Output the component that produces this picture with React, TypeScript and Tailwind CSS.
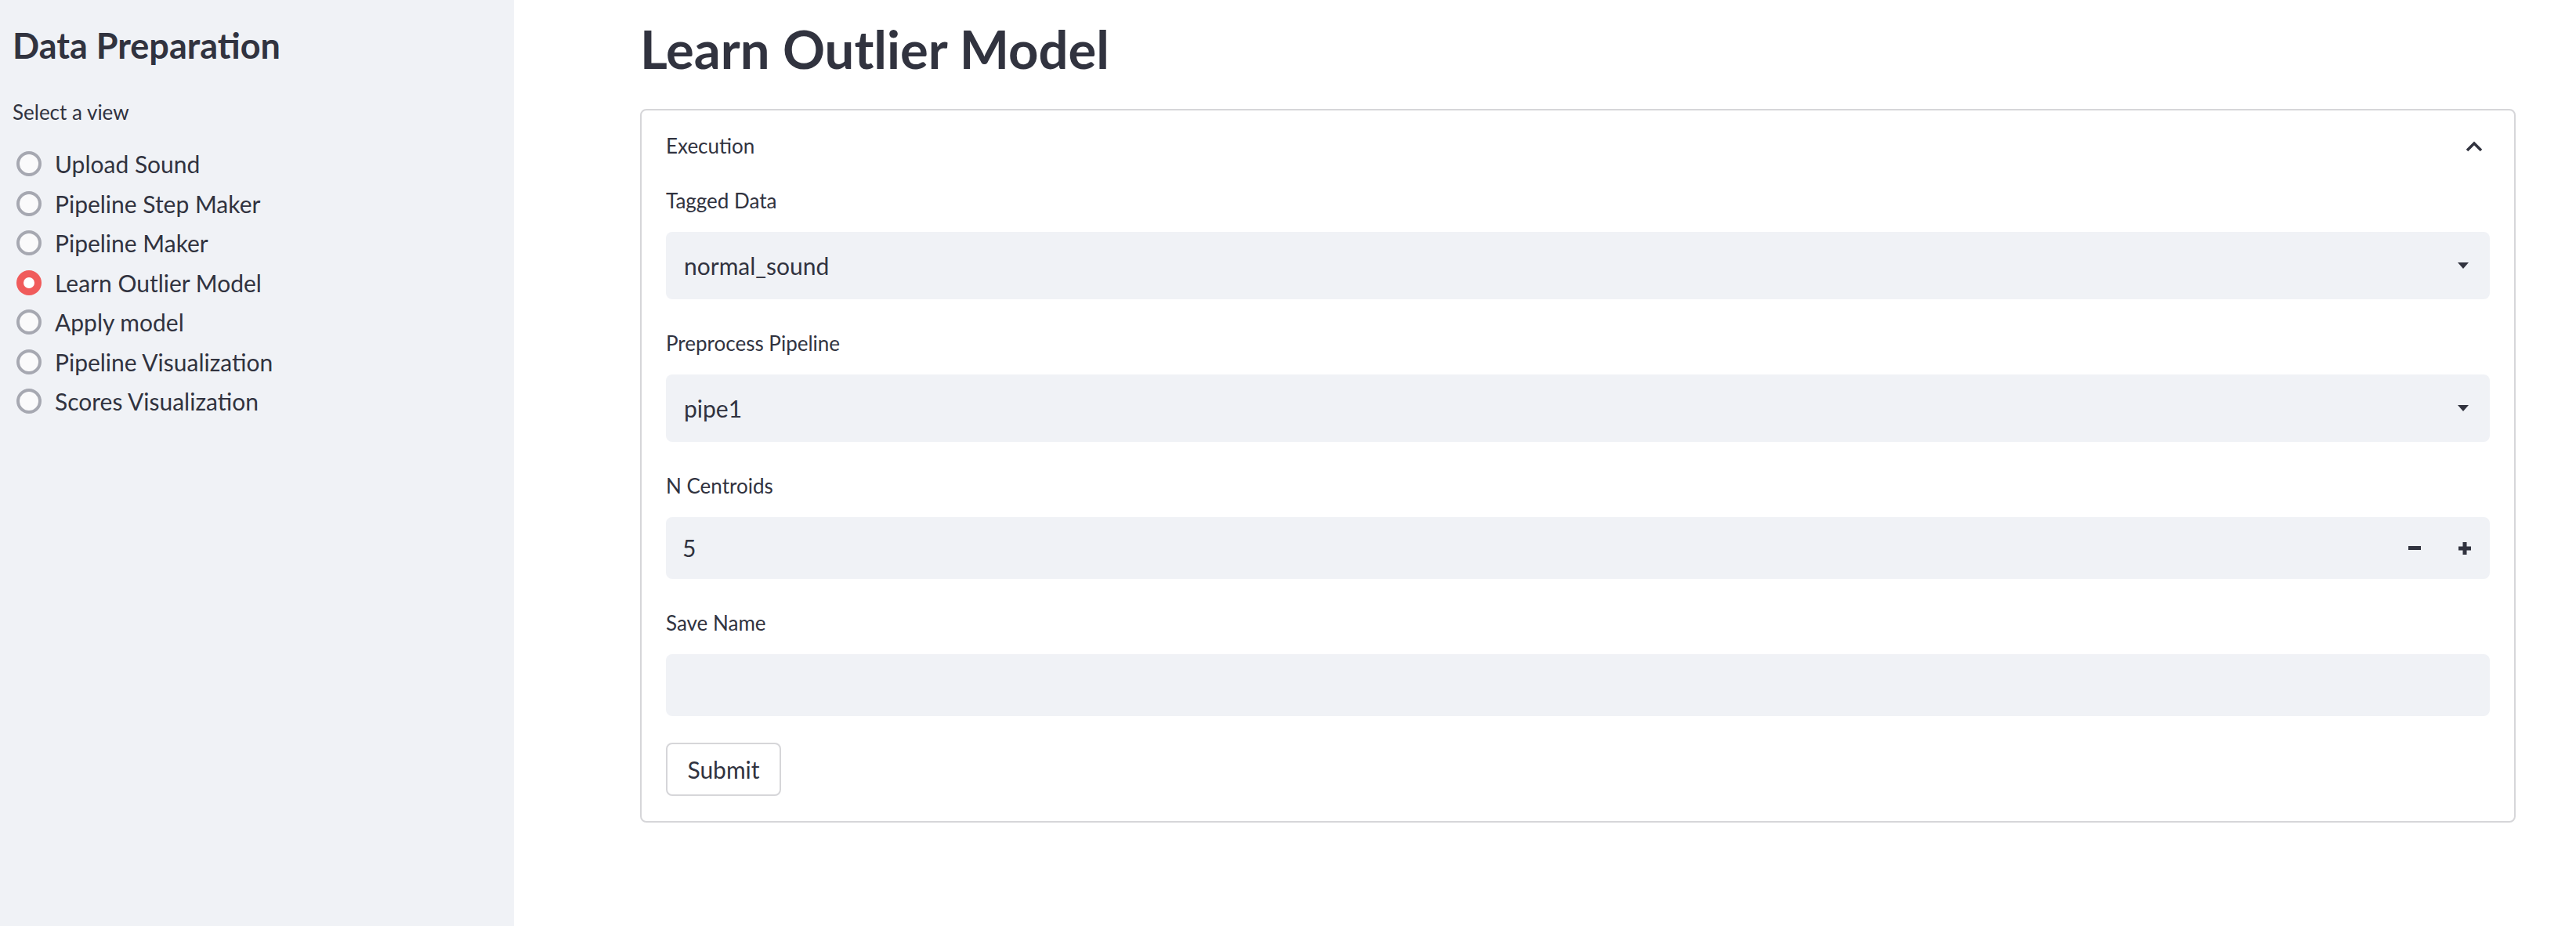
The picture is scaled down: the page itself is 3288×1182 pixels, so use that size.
import type { ReactNode } from "react";

const VIEWS = [
  "Upload Sound",
  "Pipeline Step Maker",
  "Pipeline Maker",
  "Learn Outlier Model",
  "Apply model",
  "Pipeline Visualization",
  "Scores Visualization",
];

const CURRENT = "Learn Outlier Model";

function RadioItem({ label, checked }: { label: string; checked: boolean }) {
  return (
    <label className="flex h-[50.5px] items-center">
      {checked ? (
        <span className="ml-[5px] flex size-[32px] items-center justify-center rounded-full bg-[#f05b5b]">
          <span className="size-[14px] rounded-full bg-white" />
        </span>
      ) : (
        <span className="ml-[5px] size-[32px] rounded-full border-4 border-[#a6a8b1] bg-[#fafafb]" />
      )}
      <span className="ml-[17px] text-[30px] leading-[36px]">{label}</span>
    </label>
  );
}

function Field({ label, children }: { label: string; children: ReactNode }) {
  return (
    <div>
      <div className="text-[26px] leading-[31px]">{label}</div>
      <div className="mt-[24px]">{children}</div>
    </div>
  );
}

function Caret() {
  return (
    <svg width="14" height="8" viewBox="0 0 14 8">
      <path d="M0 0h14L7 8z" fill="#31333f" />
    </svg>
  );
}

function SelectBox({ value }: { value: string }) {
  return (
    <div className="flex h-[86px] items-center justify-between rounded-[8px] bg-[#f0f2f6] pl-[23px] pr-[27px]">
      <span className="text-[30px]">{value}</span>
      <Caret />
    </div>
  );
}

function NumberBox({ value }: { value: number }) {
  return (
    <div className="flex h-[79px] items-center rounded-[8px] bg-[#f0f2f6]">
      <span className="flex-1 pl-[21px] text-[30px]">{value}</span>
      <button type="button" className="flex h-full w-[64px] items-center justify-center">
        <span className="h-[5px] w-[16px] bg-[#31333f]" />
      </button>
      <button type="button" className="flex h-full w-[64px] items-center justify-center">
        <svg width="16" height="16" viewBox="0 0 16 16">
          <rect x="0" y="5.5" width="16" height="5" fill="#31333f" />
          <rect x="5.5" y="0" width="5" height="16" fill="#31333f" />
        </svg>
      </button>
    </div>
  );
}

export default function App() {
  return (
    <div className="flex min-h-screen font-['Lato',sans-serif] text-[#31333f]">
      <aside className="w-[656px] shrink-0 bg-[#f0f2f6] pl-[16px] pt-[31px]">
        <h2 className="text-[45px] font-bold leading-[54px]">Data Preparation</h2>
        <div className="mt-[43px] text-[26px] leading-[31px]">Select a view</div>
        <div className="mt-[25px] flex flex-col">
          {VIEWS.map((v) => (
            <RadioItem key={v} label={v} checked={v === CURRENT} />
          ))}
        </div>
      </aside>

      <main className="flex-1 bg-white pl-[161px] pr-[77px] pt-[22px]">
        <h1 className="text-[67px] font-bold leading-[80px]">Learn Outlier Model</h1>

        <section className="mt-[37px] rounded-[8px] border-2 border-[#d6d6d9] px-[31px] pb-[32px] pt-[30px]">
          <div className="flex h-[31px] items-center justify-between">
            <span className="text-[26px] leading-[31px]">Execution</span>
            <svg width="22" height="14" viewBox="0 0 22 14" className="mr-[9px]">
              <polyline points="2,12 11,3 20,12" fill="none" stroke="#31333f" strokeWidth="3.5" />
            </svg>
          </div>

          <div className="mt-[39px] flex flex-col gap-[41px]">
            <Field label="Tagged Data">
              <SelectBox value="normal_sound" />
            </Field>
            <Field label="Preprocess Pipeline">
              <SelectBox value="pipe1" />
            </Field>
            <Field label="N Centroids">
              <NumberBox value={5} />
            </Field>
            <Field label="Save Name">
              <div className="h-[79px] rounded-[8px] bg-[#f0f2f6]" />
            </Field>
          </div>

          <button
            type="button"
            className="mt-[34px] h-[68px] w-[147px] rounded-[8px] border-2 border-[#d6d6d9] bg-white text-[30px]"
          >
            Submit
          </button>
        </section>
      </main>
    </div>
  );
}
